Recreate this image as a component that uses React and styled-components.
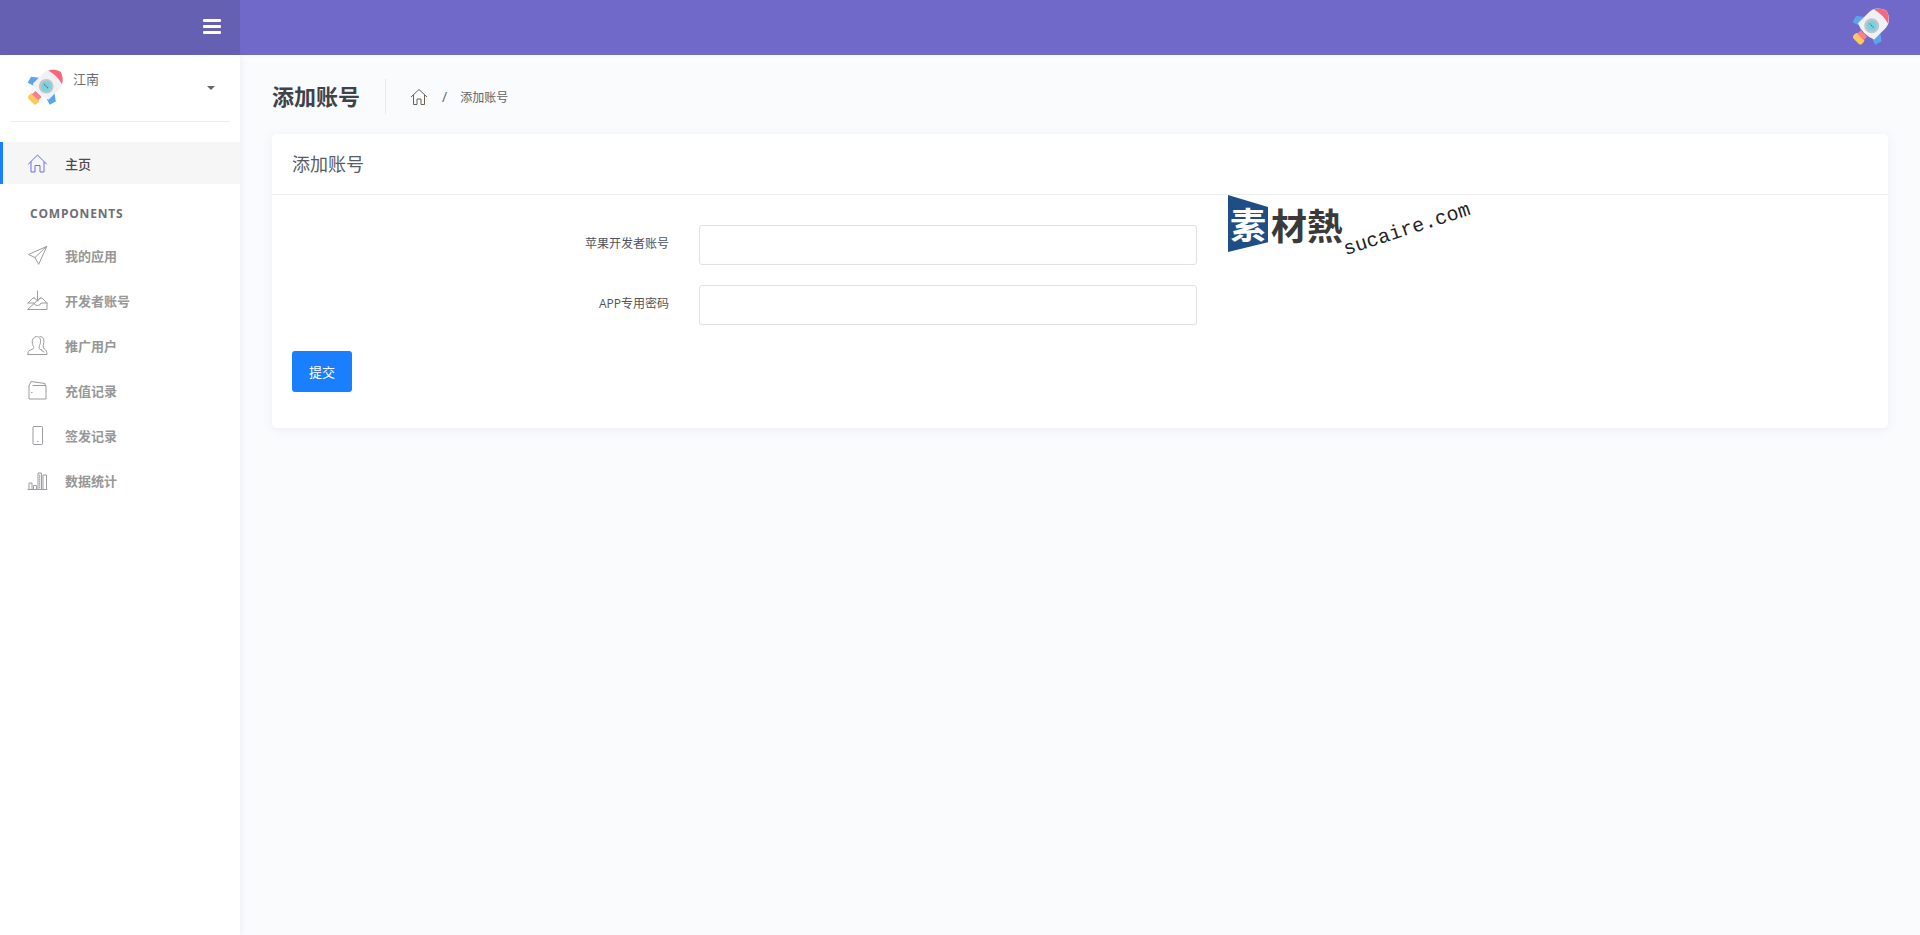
import React from 'react';
import styled, { createGlobalStyle } from 'styled-components';

const Global = createGlobalStyle`
  html, body { margin: 0; padding: 0; height: 100%; background: #fafbfd; }
  body { font-family: "Open Sans", "Noto Sans CJK SC", sans-serif; overflow: hidden; }
  * { box-sizing: border-box; }
`;

const Page = styled.div`
  width: 1920px;
  height: 935px;
  display: grid;
  grid-template-columns: 240px 1fr;
  grid-template-rows: 55px 1fr;
`;

const Brand = styled.div`
  background: #6660b3;
  display: flex;
  align-items: center;
  justify-content: flex-end;
  padding: 0 19px 0 0;
`;

const Topbar = styled.header`
  background: #7069ca;
  display: flex;
  align-items: center;
  justify-content: flex-end;
  padding: 0 31px 0 0;
`;

const Burger = styled.span`
  display: flex;
  flex-direction: column;
  gap: 3px;
  width: 18px;
  margin-top: -2px;
  i { display: block; height: 3px; background: #fff; border-radius: 1px; }
`;

const Sidebar = styled.aside`
  background: #fff;
  box-shadow: 1px 0 6px rgba(120, 130, 160, 0.1);
  position: relative;
`;

const UserBlock = styled.div`
  margin: 0 10px;
  height: 67px;
  border-bottom: 1px solid #ebedf0;
  display: flex;
  padding: 16px 0 0 18px;
  position: relative;
`;

const UserName = styled.span`
  font-size: 13px;
  line-height: 18px;
  color: #6b6f75;
  margin: -1px 0 0 10px;
`;

const Caret = styled.span`
  position: absolute;
  right: 15px;
  top: 31px;
  border: 4px solid transparent;
  border-top: 4px solid #666;
  border-bottom: 0;
`;

const Nav = styled.nav`
  padding-top: 20px;
`;

const NavItem = styled.a`
  display: flex;
  align-items: center;
  height: ${p => (p.$active ? '42px' : '45px')};
  padding-left: ${p => (p.$active ? '25px' : '28px')};
  gap: 17px;
  font-size: 13px;
  font-weight: ${p => (p.$active ? 500 : 700)};
  color: ${p => (p.$active ? '#4a4a4a' : '#979797')};
  background: ${p => (p.$active ? '#f6f6f7' : 'transparent')};
  border-left: ${p => (p.$active ? '3px solid #1a7fff' : '0')};
  svg { flex: none; width: 21px; height: 21px; margin-left: -1px; }
`;

const NavLabel = styled.div`
  font-size: 12px;
  font-weight: 700;
  letter-spacing: 0.8px;
  color: #6c6f75;
  padding: 21px 0 0 30px;
  height: 49px;
  line-height: 18px;
`;

const Main = styled.main`
  padding: 24px 32px 0 32px;
  position: relative;
`;

const TitleRow = styled.div`
  display: flex;
  align-items: center;
  height: 35px;
  margin-bottom: 20px;
`;

const PageTitle = styled.h1`
  margin: 0;
  font-size: 22px;
  line-height: 35px;
  font-weight: 700;
  color: #3f4247;
  padding-right: 25px;
  border-right: 1px solid #e8e9ec;
`;

const Crumbs = styled.div`
  display: flex;
  align-items: center;
  padding-left: 24px;
  font-size: 12px;
  color: #5f6368;
  span { margin: 0 13px 0 14px; font-size: 14px; }
`;

const Card = styled.section`
  background: #fff;
  border-radius: 5px;
  box-shadow: 0 2px 10px rgba(120, 130, 160, 0.1);
  height: 294px;
`;

const CardHead = styled.div`
  height: 61px;
  padding: 0 20px;
  border-bottom: 1px solid #ebedf0;
  font-size: 18px;
  line-height: 60px;
  color: #585c62;
`;

const Form = styled.form`
  padding: 30px 20px;
`;

const Field = styled.div`
  display: flex;
  margin-bottom: 20px;
`;

const FieldLabel = styled.label`
  width: 377px;
  text-align: right;
  font-size: 12px;
  line-height: 18px;
  color: #50535c;
  margin-top: 10px;
`;

const Input = styled.input`
  width: 498px;
  height: 40px;
  margin-left: 30px;
  border: 1px solid #dfe0e8;
  border-radius: 3px;
  background: #fff;
  outline: none;
  box-shadow: none;
  appearance: none;
`;

const Submit = styled.button`
  display: block;
  width: 60px;
  height: 41px;
  margin-top: 26px;
  border: 0;
  border-radius: 3px;
  background: #1a7fff;
  color: #fff;
  font-family: inherit;
  font-size: 13px;
`;

const Watermark = styled.div`
  position: absolute;
  left: 988px;
  top: 140px;
  width: 250px;
  height: 70px;
  pointer-events: none;
`;

const WmBadge = styled.div`
  position: absolute;
  left: 0;
  top: 0;
  width: 40px;
  height: 57px;
  background: #1f4e86;
  clip-path: polygon(0 0, 100% 21%, 100% 83%, 0 100%);
  color: #fff;
  font: 700 36px/57px "Noto Sans CJK SC", sans-serif;
  text-align: center;
`;

const WmText = styled.div`
  position: absolute;
  left: 43px;
  top: 6px;
  font: 700 36px/46px "Noto Sans CJK SC", sans-serif;
  color: #3a3a3a;
  white-space: nowrap;
`;

const WmUrl = styled.div`
  position: absolute;
  left: 113px;
  top: 23px;
  font: 400 20px/24px "Liberation Mono", monospace;
  color: #222;
  white-space: nowrap;
  transform: rotate(-18deg);
`;

const Rocket = ({ size = 36 }) => (
  <svg width={size} height={size} viewBox="0 0 36 36" style={{ overflow: 'visible' }}>
    <g transform="translate(18.7 15.7) rotate(45)">
      <path d="M-10 -2 L-18 4 L-16 11 L-10 9Z" fill="#5aa5ec" />
      <path d="M10 -2 L18 4 L16 11 L10 9Z" fill="#5aa5ec" />
      <rect x="-6" y="15" width="12" height="7" rx="2.5" fill="#fcc95c" />
      <rect x="-4.5" y="11" width="9" height="5" fill="#f97f8e" />
      <path d="M-11.5 8 L-11.5 -8 C-11.5 -14 -7 -19 0 -21 C7 -19 11.5 -14 11.5 -8 L11.5 8 Q0 13 -11.5 8Z" fill="#f0f1f5" />
      <path d="M-10 -13 C-8 -16.5 -5 -19.5 0 -21 C5 -19.5 8 -16.5 10 -13 Q0 -16 -10 -13Z" fill="#f8687c" />
      <circle cx="0" cy="0" r="7.5" fill="#c2c4c9" />
      <circle cx="0" cy="0" r="5.3" fill="#7ad2de" />
      <path d="M-3 0 H3" stroke="#47727c" strokeWidth="1.2" strokeDasharray="1.2 1" />
    </g>
  </svg>
);

const Line = ({ color = '#9b9ba0', children }) => (
  <svg viewBox="0 0 21 21" fill="none" stroke={color} strokeWidth="1" strokeLinejoin="round" strokeLinecap="round">
    {children}
  </svg>
);

const icons = {
  home: (
    <Line color="#6a6cf0">
      <path d="M1.5 11 L10.5 2 L19.5 11" />
      <path d="M4 9 V19 H8 V12.5 H13 V19 H17 V9" />
    </Line>
  ),
  send: (
    <Line>
      <path d="M19.5 1.5 L1.5 9.5 L8 12.5 L11.5 19 Z" />
      <path d="M19.5 1.5 L8 12.5" />
    </Line>
  ),
  inbox: (
    <Line>
      <path d="M1 13 L6 8 H7.5 M13.5 8 H15 L20 13 V19.5 H1 Z" />
      <path d="M1 13 H7 Q7.5 15.5 10.5 15.5 Q13.5 15.5 14 13 H20" />
      <path d="M10.5 1 V11 M7.5 8 L10.5 11 L13.5 8" />
    </Line>
  ),
  users: (
    <Line>
      <path d="M1 19.5 V18 C1 16 3 15 6 14 C7 13.5 7 12 6 10.5 C4.5 8 5 2 9.5 1.5 C12.5 1.5 14 4 13.5 7.5 C13 10 12 11.5 12 13 C12 14 13 14.5 15 15" />
      <path d="M13 1.5 C16.5 1.5 17.5 5 16.5 9 C16 11 16 13 17.5 14 C19 15 20 16 20 19.5 H1" />
      <path d="M14.5 15.5 L17 17" />
    </Line>
  ),
  wallet: (
    <Line>
      <path d="M2 6 V19 H19 V5.5 H6" />
      <path d="M2 6 L4 1.5 L18 3.5 V5.5" />
      <path d="M4.5 12.5 h.6" />
    </Line>
  ),
  phone: (
    <Line>
      <rect x="6" y="1.5" width="9.5" height="18" rx="1" />
      <path d="M10.5 16.5 h.6" />
    </Line>
  ),
  bars: (
    <Line>
      <path d="M1 19.5 H20" />
      <path d="M2 19 V13 H5 V19 M6.5 19 V15.5 H9.5 V19 M11 19 V3 H14.5 V19 M16 19 V5 H19.5 V19" />
      <path d="M12.7 5 V18" strokeDasharray="1 1" />
    </Line>
  ),
};

const menu = [
  ['send', '我的应用'],
  ['inbox', '开发者账号'],
  ['users', '推广用户'],
  ['wallet', '充值记录'],
  ['phone', '签发记录'],
  ['bars', '数据统计'],
];

export default function App() {
  return (
    <Page>
      <Global />
      <Brand>
        <Burger><i /><i /><i /></Burger>
      </Brand>
      <Topbar>
        <Rocket size={36} />
      </Topbar>
      <Sidebar>
        <UserBlock>
          <Rocket size={35} />
          <UserName>江南</UserName>
          <Caret />
        </UserBlock>
        <Nav>
          <NavItem $active>{icons.home}主页</NavItem>
          <NavLabel>COMPONENTS</NavLabel>
          {menu.map(([icon, label]) => (
            <NavItem key={label}>{icons[icon]}{label}</NavItem>
          ))}
        </Nav>
      </Sidebar>
      <Main>
        <TitleRow>
          <PageTitle>添加账号</PageTitle>
          <Crumbs>
            <svg width="18" height="18" viewBox="0 0 18 18" fill="none" stroke="#6b6257" strokeWidth="1">
              <path d="M1 9 L9 1.5 L17 9" />
              <path d="M3.5 7 V16.5 H7 V11 H11 V16.5 H14.5 V7" />
            </svg>
            <span>/</span>
            添加账号
          </Crumbs>
        </TitleRow>
        <Card>
          <CardHead>添加账号</CardHead>
          <Form>
            <Field>
              <FieldLabel>苹果开发者账号</FieldLabel>
              <Input type="text" />
            </Field>
            <Field>
              <FieldLabel>APP专用密码</FieldLabel>
              <Input type="password" />
            </Field>
            <Submit type="button">提交</Submit>
          </Form>
        </Card>
        <Watermark>
          <WmBadge>素</WmBadge>
          <WmText>材熱</WmText>
          <WmUrl>sucaire.com</WmUrl>
        </Watermark>
      </Main>
    </Page>
  );
}
